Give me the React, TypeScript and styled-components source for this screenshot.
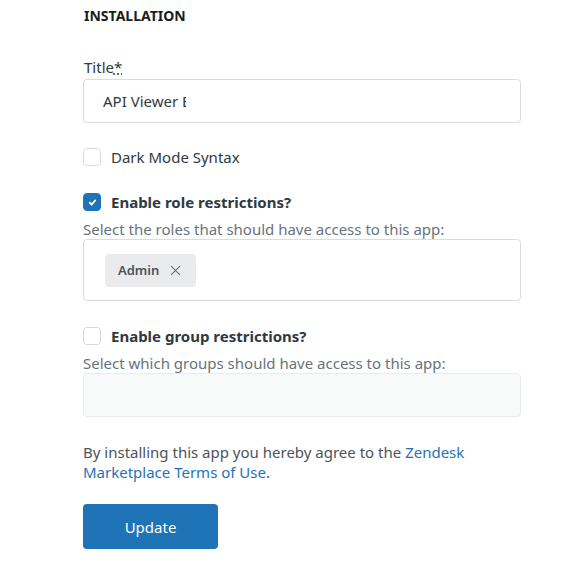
import React from "react";
import styled, { createGlobalStyle } from "styled-components";

const Global = createGlobalStyle`
  html, body { margin: 0; padding: 0; background: #fff; }
  body { font-family: "Noto Sans", "Open Sans", sans-serif; color: #2f3941; }
`;

const Page = styled.div`
  width: 438px;
  padding: 6px 0 0 83px;
`;

const Heading = styled.h2`
  margin: 0 0 0 1px;
  font-size: 14px;
  line-height: 20px;
  font-weight: 700;
  color: #1a1d20;
  text-transform: uppercase;
`;

const Field = styled.div<{ $mt: number }>`
  margin-top: ${(p) => p.$mt}px;
  display: flex;
  flex-direction: column;
`;

const Label = styled.label`
  font-size: 15px;
  line-height: 20px;
  color: #2f3941;
  margin-left: 1px;
`;

const Req = styled.abbr`
  text-decoration: underline dotted;
  cursor: help;
`;

const TextInput = styled.div`
  margin-top: 2px;
  height: 44px;
  box-sizing: border-box;
  border: 1px solid #d8dcde;
  border-radius: 4px;
  padding: 0 19px;
  display: flex;
  align-items: center;
`;

const Value = styled.span`
  display: block;
  max-width: 83px;
  overflow: hidden;
  white-space: nowrap;
  font-size: 15px;
  line-height: 20px;
  color: #2f3941;
`;

const CheckRow = styled.div<{ $mt: number }>`
  margin-top: ${(p) => p.$mt}px;
  height: 20px;
  display: flex;
  align-items: center;
  gap: 10px;
`;

const Box = styled.span<{ $on?: boolean }>`
  width: 18px;
  height: 18px;
  box-sizing: border-box;
  border-radius: 4px;
  border: 1px solid ${(p) => (p.$on ? "#1f73b7" : "#d8dcde")};
  background: ${(p) => (p.$on ? "#1f73b7" : "#fff")};
  display: flex;
  align-items: center;
  justify-content: center;
  flex-shrink: 0;
`;

const CheckText = styled.span<{ $bold?: boolean }>`
  font-size: 15px;
  line-height: 20px;
  font-weight: ${(p) => (p.$bold ? 700 : 400)};
  color: #2f3941;
`;

const Hint = styled.div`
  margin-top: 7px;
  font-size: 15px;
  line-height: 20px;
  color: #68737d;
`;

const Multi = styled.div`
  height: 62px;
  box-sizing: border-box;
  border: 1px solid #d8dcde;
  border-radius: 4px;
  padding: 0 21px;
  display: flex;
  align-items: center;
`;

const Tag = styled.span`
  height: 33px;
  display: inline-flex;
  align-items: center;
  gap: 11px;
  padding: 0 15px 0 13px;
  border-radius: 4px;
  background: #e9ebed;
  font-size: 13px;
  font-weight: 600;
  color: #49545c;
`;

const Disabled = styled.div`
  height: 44px;
  box-sizing: border-box;
  border: 1px solid #e9ebed;
  border-radius: 4px;
  background: #f8f9f9;
`;

const Para = styled.p`
  margin: 25px 0 0 0;
  font-size: 15px;
  line-height: 20px;
  color: #49545c;
`;

const Link = styled.a`
  color: #1f73b7;
  text-decoration: none;
`;

const Button = styled.button`
  margin-top: 22px;
  width: 135px;
  height: 45px;
  border: none;
  border-radius: 4px;
  background: #1f73b7;
  color: #fff;
  font-family: inherit;
  font-size: 15px;
  cursor: pointer;
`;

const Check = () => (
  <svg width="11" height="11" viewBox="0 0 12 12" fill="none">
    <path d="M3 6.2l2 2 4-4.4" stroke="#fff" strokeWidth="2" strokeLinecap="round" strokeLinejoin="round" />
  </svg>
);

const X = () => (
  <svg width="11" height="11" viewBox="0 0 12 12">
    <path d="M1.5 1.5l9 9M10.5 1.5l-9 9" stroke="#68737d" strokeWidth="1.2" strokeLinecap="round" />
  </svg>
);

export default function App() {
  return (
    <>
      <Global />
      <Page>
        <Heading>Installation</Heading>
        <Field $mt={31}>
          <Label>
            Title<Req title="required">*</Req>
          </Label>
          <TextInput>
            <Value>API Viewer Extension</Value>
          </TextInput>
        </Field>
        <CheckRow $mt={24}>
          <Box />
          <CheckText>Dark Mode Syntax</CheckText>
        </CheckRow>
        <CheckRow $mt={25}>
          <Box $on>
            <Check />
          </Box>
          <CheckText $bold>Enable role restrictions?</CheckText>
        </CheckRow>
        <Hint>Select the roles that should have access to this app:</Hint>
        <Multi>
          <Tag>
            Admin
            <X />
          </Tag>
        </Multi>
        <CheckRow $mt={25}>
          <Box />
          <CheckText $bold>Enable group restrictions?</CheckText>
        </CheckRow>
        <Hint>Select which groups should have access to this app:</Hint>
        <Disabled />
        <Para>
          By installing this app you hereby agree to the <Link href="#">Zendesk Marketplace Terms of Use</Link>.
        </Para>
        <Button>Update</Button>
      </Page>
    </>
  );
}
